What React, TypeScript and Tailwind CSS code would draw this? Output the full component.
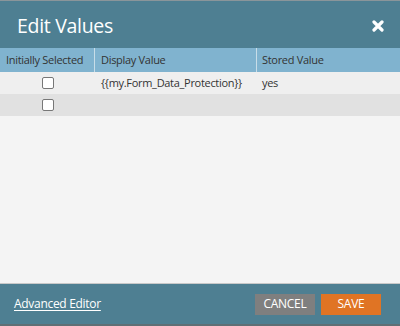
export default function App() {
  const rows = [
    { display: "{{my.Form_Data_Protection}}", stored: "yes" },
    { display: "", stored: "" },
  ];

  return (
    <div
      className="w-[400px] h-[326px] flex flex-col bg-[#f4f4f4] text-[#333]"
      style={{ fontFamily: '"Open Sans", "Noto Sans", sans-serif' }}
    >
      <div className="h-[48px] bg-[#4e7f92] border-t border-[#8a959a] flex items-center justify-between pl-[17px] pr-[16px]">
        <h1 className="text-[19.5px] text-white leading-none tracking-[-0.3px] mt-[3px]">Edit Values</h1>
        <svg width="12" height="12" viewBox="0 0 12 12" className="mt-[2px]">
          <path d="M2 2 L10 10 M10 2 L2 10" stroke="white" strokeWidth="3.2" strokeLinecap="round" />
        </svg>
      </div>

      <div className="h-[24px] bg-[#80b3cf] grid grid-cols-[94px_1px_161px_1px_1fr] text-[11px] tracking-[-0.3px] whitespace-nowrap items-stretch">
        <div className="flex items-center pl-[6px]">Initially Selected</div>
        <div className="bg-[#c8dde8]" />
        <div className="flex items-center pl-[6px]">Display Value</div>
        <div className="bg-[#c8dde8]" />
        <div className="flex items-center pl-[5px]">Stored Value</div>
      </div>

      {rows.map((r, i) => (
        <div
          key={i}
          className={`h-[22px] grid grid-cols-[95px_162px_1fr] text-[11px] tracking-[-0.3px] whitespace-nowrap items-center ${
            i % 2 === 0 ? "bg-[#efefef]" : "bg-[#e1e1e1]"
          }`}
        >
          <div className="flex justify-center">
            <span className="w-[12px] h-[12px] rounded-[2px] border border-[#777] bg-white" />
          </div>
          <div className="pl-[6px]">{r.display}</div>
          <div className="pl-[5px]">{r.stored}</div>
        </div>
      ))}

      <div className="flex-1" />

      <div className="h-[43px] bg-[#4e7f92] border-t border-[#c8c8c8] border-b-2 border-b-[#5f6f75] flex items-center justify-between pl-[14px] pr-[19px]">
        <a href="#" className="text-[12px] tracking-[-0.3px] text-white underline underline-offset-2">
          Advanced Editor
        </a>
        <div className="flex gap-[6px]">
          <button className="w-[60px] h-[21px] bg-[#7f7f7f] text-white text-[12px] tracking-[-0.3px]">CANCEL</button>
          <button className="w-[60px] h-[21px] bg-[#e07424] text-white text-[12px] tracking-[-0.3px]">SAVE</button>
        </div>
      </div>
    </div>
  );
}
